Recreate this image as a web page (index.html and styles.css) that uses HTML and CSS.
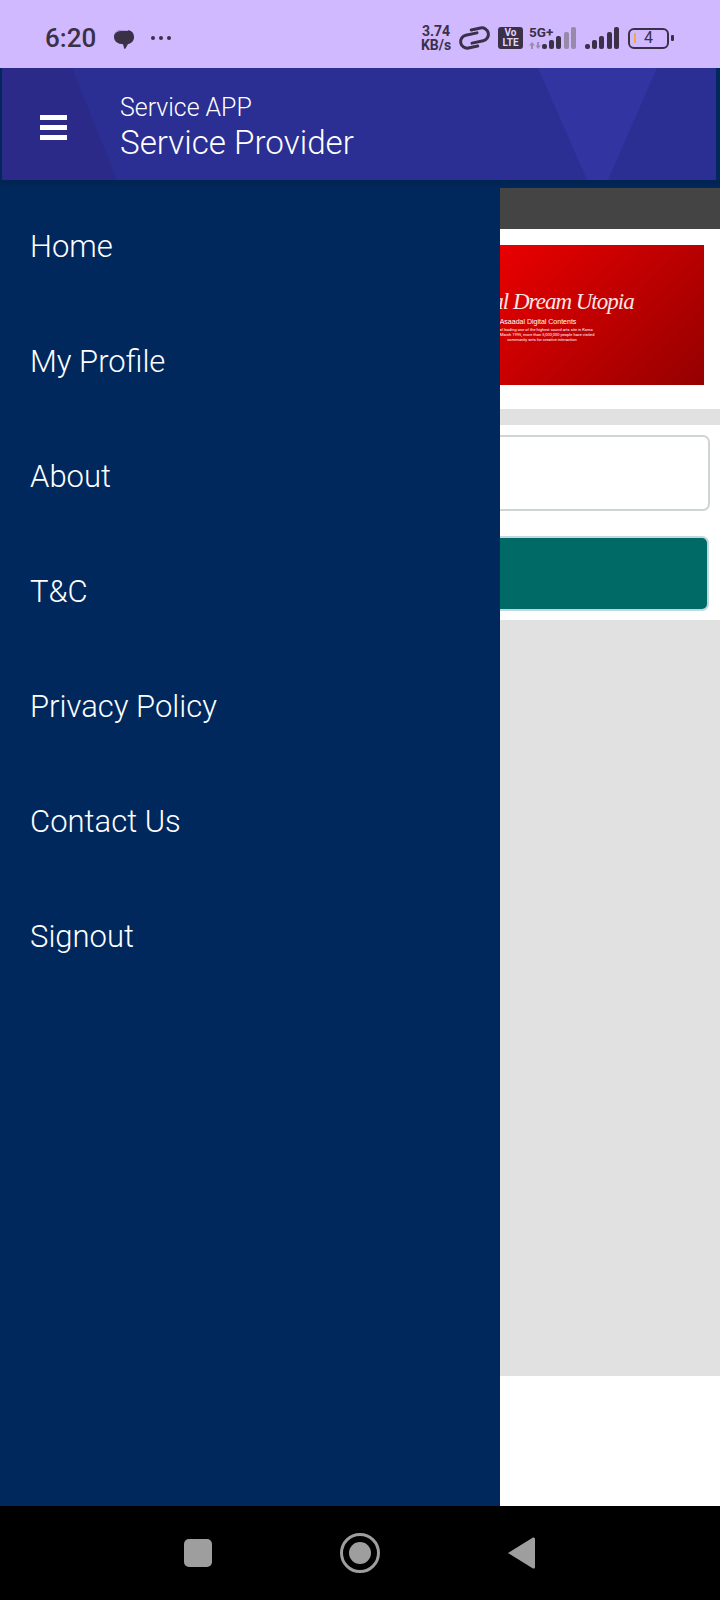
FILE: index.html
```html
<!DOCTYPE html>
<html lang="en">
<head>
    <meta charset="UTF-8">
    <meta name="viewport" content="width=device-width, initial-scale=1.0">
    <title>Service Provider</title>
    <link rel="stylesheet" href="styles.css">
</head>
<body>
    <div class="status-bar">
        <div class="status-left">
            <span class="time">6:20</span>
            <svg class="bubble" width="22" height="22" viewBox="0 0 22 22">
                <path d="M8 2h5c5 0 8 2.500 8 7 0 4-2.500 6.500-6 7l-2.500 4.500c-.5.5-1 .5-1.300 0L10 16.300C5 16 1 13.500 1 9c0-4 3-7 7-7z" fill="#3a3048"/>
                <path d="M2.500 5C4 3 6.500 2.500 9 2.500h6" fill="none" stroke="#d0b9ff" stroke-width=".8"/>
            </svg>
            <svg class="dots" width="22" height="6" viewBox="0 0 22 6">
                <circle cx="3" cy="3" r="2" fill="#3a3048"/>
                <circle cx="11" cy="3" r="2" fill="#3a3048"/>
                <circle cx="19" cy="3" r="2" fill="#3a3048"/>
            </svg>
        </div>
        <div class="status-right">
            <div class="speed"><span>3.74</span><span>KB/s</span></div>
            <svg class="link-icon" width="33" height="24" viewBox="0 0 33 24">
                <g transform="rotate(-12 16.500 12)" fill="none" stroke="#3a3048" stroke-width="3" stroke-linecap="round">
                    <path d="M20 7.500H8.500a6.500 6.500 0 0 0 0 13H18"/>
                    <path d="M13 16.500H24.500a6.500 6.500 0 0 0 0-13H15"/>
                </g>
            </svg>
            <div class="volte"><span>Vo</span><span>LTE</span></div>
            <div class="sim">
                <span class="five-g">5G+</span>
                <svg class="arrows" width="12" height="7" viewBox="0 0 12 7">
                    <path d="M3 0l3 3.500H4V7H2V3.500H0zM9 7L6.500 3.500H8V0h2v3.500h2z" fill="#9a8ab0"/>
                </svg>
            </div>
            <svg class="signal sim-one" width="34" height="22" viewBox="0 0 34 22">
                <rect x="0" y="17" width="5" height="5" rx="2" fill="#3a3048"/>
                <rect x="7" y="13" width="5" height="9" rx="2" fill="#3a3048"/>
                <rect x="14" y="9" width="5" height="13" rx="2" fill="#3a3048"/>
                <rect x="22" y="5" width="5" height="17" rx="2" fill="#968aa8"/>
                <rect x="29" y="0" width="5" height="22" rx="2" fill="#968aa8"/>
            </svg>
            <svg class="signal sim-two" width="34" height="22" viewBox="0 0 34 22">
                <rect x="0" y="17" width="5" height="5" rx="2" fill="#3a3048"/>
                <rect x="7" y="13" width="5" height="9" rx="2" fill="#3a3048"/>
                <rect x="14" y="9" width="5" height="13" rx="2" fill="#3a3048"/>
                <rect x="22" y="5" width="5" height="17" rx="2" fill="#3a3048"/>
                <rect x="29" y="0" width="5" height="22" rx="2" fill="#3a3048"/>
            </svg>
            <div class="battery">
                <span class="battery-level"></span>
                <span class="battery-num">4</span>
            </div>
            <span class="battery-nub"></span>
        </div>
    </div>

    <header class="app-bar">
        <div class="app-bar-inner">
            <svg class="app-bar-art" width="714" height="112" viewBox="0 0 714 112" preserveAspectRatio="none">
                <polygon points="0,0 70,0 115,112 0,112" fill="#2b2a88"/>
                <polygon points="536,0 655,0 606,112 585,112" fill="#3234a2"/>
            </svg>
            <div class="menu-btn">
                <span></span>
                <span></span>
                <span></span>
            </div>
            <div class="titles">
                <div class="title-small">Service APP</div>
                <div class="title-big">Service Provider</div>
            </div>
        </div>
    </header>

    <div class="content">
        <div class="main">
            <div class="dark-strip"></div>
            <div class="banner-wrap">
                <div class="banner">
                    <div class="banner-text">
                        <div class="banner-title">Global Dream Utopia</div>
                        <div class="banner-sub">Asaadal Digital Contents</div>
                        <div class="banner-line">Global leading one of the highest sound arts site in Korea</div>
                        <div class="banner-line">since March 1995, more than 5,000,000 people have visited</div>
                        <div class="banner-line">community sets for creative interaction</div>
                    </div>
                </div>
            </div>
            <div class="gray-band"></div>
            <div class="form-box">
                <div class="field"></div>
                <div class="submit"></div>
            </div>
            <div class="gray-fill"></div>
            <div class="white-fill"></div>
        </div>

        <nav class="drawer">
            <a class="drawer-item">Home</a>
            <a class="drawer-item">My Profile</a>
            <a class="drawer-item">About</a>
            <a class="drawer-item">T&amp;C</a>
            <a class="drawer-item">Privacy Policy</a>
            <a class="drawer-item">Contact Us</a>
            <a class="drawer-item">Signout</a>
        </nav>
    </div>

    <div class="nav-bar">
        <span class="nav-square"></span>
        <span class="nav-home"><span></span></span>
        <svg class="nav-back" width="27" height="32" viewBox="0 0 27 32">
            <path d="M0 16L25 .5Q27 0 27 2V30Q27 32 25 31.500Z" fill="#9e9e9e"/>
        </svg>
    </div>
</body>
</html>
```

FILE: styles.css
```css
/* Basic page */
body {
    margin: 0;
    width: 720px;
    height: 1600px;
    overflow: hidden;
    font-family: Roboto, "Liberation Sans", sans-serif;
    background-color: #fff;
}

/* Phone status bar */
.status-bar {
    height: 68px;
    background-color: #d0b9ff;
    color: #3a3048;
    display: flex;
    justify-content: space-between;
    align-items: center;
    padding: 8px 46px 0 45px;
    box-sizing: border-box;
}
.status-left {
    display: flex;
    align-items: center;
}
.time {
    font-size: 26px;
    font-weight: 500;
    line-height: 30px;
}
.bubble {
    margin-left: 17px;
    margin-top: 2px;
}
.dots {
    margin-left: 15px;
}
.status-right {
    display: flex;
    align-items: center;
}
.speed {
    display: flex;
    flex-direction: column;
    align-items: center;
    font-size: 14px;
    font-weight: 700;
    line-height: 14px;
    width: 34px;
}
.link-icon {
    margin-left: 5px;
    overflow: visible;
}
.volte {
    width: 25px;
    height: 22px;
    margin-left: 7px;
    border-radius: 3px;
    background-color: #3a3048;
    color: #e2d6fa;
    display: flex;
    flex-direction: column;
    align-items: center;
    justify-content: center;
    font-size: 10px;
    font-weight: 700;
    line-height: 10px;
}
.sim {
    width: 26px;
    height: 24px;
    margin-left: 6px;
    display: flex;
    flex-direction: column;
}
.five-g {
    font-size: 13.500px;
    font-weight: 700;
    line-height: 13px;
}
.arrows {
    margin-top: 3px;
}
.sim-one {
    margin-left: -13px;
}
.sim-two {
    margin-left: 9px;
}
.battery {
    width: 41px;
    height: 21px;
    margin-left: 9px;
    border: 2px solid #3a3048;
    border-radius: 6px;
    box-sizing: border-box;
    display: flex;
    align-items: center;
}
.battery-level {
    width: 2px;
    height: 10px;
    margin-left: 4px;
    background-color: #f0a84a;
}
.battery-num {
    flex: 1;
    text-align: center;
    font-size: 16px;
    line-height: 16px;
    margin-right: 6px;
}
.battery-nub {
    width: 3px;
    height: 6px;
    margin-left: 2px;
    border-radius: 1px;
    background-color: #3a3048;
}

/* Toolbar */
.app-bar {
    height: 120px;
    background: linear-gradient(to bottom, #00285c 0, #00285c 112px, #02234f 113px, #00285c 120px);
    padding: 0 4px 8px 2px;
    box-sizing: border-box;
    position: relative;
    z-index: 2;
}
.app-bar-inner {
    height: 112px;
    background-color: #2b2e92;
    color: #fff;
    display: flex;
    align-items: center;
    position: relative;
    overflow: hidden;
}
.app-bar-art {
    position: absolute;
    top: 0;
    left: 0;
    width: 100%;
    height: 100%;
}
.menu-btn {
    width: 27px;
    margin-left: 38px;
    margin-top: 6px;
    display: flex;
    flex-direction: column;
    gap: 5px;
    position: relative;
}
.menu-btn span {
    height: 5px;
    background-color: #fff;
}
.titles {
    margin-left: 53px;
    margin-top: 5px;
    position: relative;
}
.title-small {
    font-size: 24.900px;
    font-weight: 300;
    line-height: 32px;
}
.title-big {
    font-size: 33.200px;
    font-weight: 300;
    line-height: 37px;
}

/* Page behind the drawer */
.content {
    height: 1318px;
    position: relative;
}
.main {
    height: 100%;
    display: flex;
    flex-direction: column;
}
.dark-strip {
    height: 41px;
    background-color: #444;
}
.banner-wrap {
    height: 180px;
    padding: 16px 16px 24px;
    box-sizing: border-box;
}
.banner {
    height: 140px;
    background: linear-gradient(135deg, #ff0000 48%, #950000 100%);
    color: #fff;
    display: flex;
    justify-content: flex-end;
    padding-right: 52px;
    overflow: hidden;
}
.banner-text {
    width: 220px;
    text-align: center;
    padding-top: 43px;
}
.banner-title {
    font-family: "Liberation Serif", serif;
    font-style: italic;
    font-size: 23px;
    line-height: 28px;
    letter-spacing: -1px;
    white-space: nowrap;
    color: #f8e6e6;
}
.banner-sub {
    font-family: "Liberation Sans", sans-serif;
    font-size: 7px;
    line-height: 10px;
    margin-right: 8px;
    margin-top: 1px;
    white-space: nowrap;
}
.banner-line {
    font-size: 4px;
    line-height: 5px;
    white-space: nowrap;
}
.gray-band {
    height: 16px;
    background-color: #e1e1e1;
}
.form-box {
    height: 195px;
    padding: 10px 10px 8px;
    box-sizing: border-box;
    display: flex;
    flex-direction: column;
    gap: 25px;
}
.field {
    height: 76px;
    border: 2px solid #cfd4d6;
    border-radius: 7px;
    box-sizing: border-box;
}
.submit {
    height: 75px;
    width: 699px;
    background-color: #006a66;
    border: 2px solid #c3d8de;
    border-radius: 7px;
    box-sizing: border-box;
}
.gray-fill {
    height: 756px;
    background-color: #e1e1e1;
}
.white-fill {
    flex: 1;
    background-color: #fff;
}

/* Side drawer */
.drawer {
    position: absolute;
    top: 0;
    left: 0;
    bottom: 0;
    width: 500px;
    padding-top: 1px;
    box-sizing: border-box;
    background-color: #00285c;
}
.drawer-item {
    display: flex;
    align-items: center;
    height: 115px;
    padding-left: 30px;
    color: #fff;
    font-size: 31px;
    font-weight: 300;
}

/* Android buttons */
.nav-bar {
    height: 94px;
    background-color: #000;
    display: flex;
    align-items: center;
    gap: 128px;
    padding-left: 184px;
    box-sizing: border-box;
}
.nav-square {
    width: 28px;
    height: 28px;
    border-radius: 5px;
    background-color: #9e9e9e;
}
.nav-home {
    width: 40px;
    height: 40px;
    border: 3px solid #9e9e9e;
    border-radius: 50%;
    box-sizing: border-box;
    display: flex;
    align-items: center;
    justify-content: center;
}
.nav-home span {
    width: 22px;
    height: 22px;
    border-radius: 50%;
    background-color: #9e9e9e;
}
```
